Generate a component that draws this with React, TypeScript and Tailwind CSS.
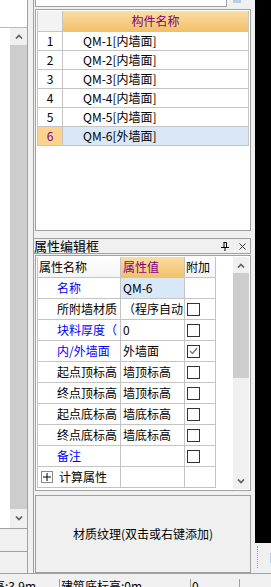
const names = ['QM-1[内墙面]', 'QM-2[内墙面]', 'QM-3[内墙面]', 'QM-4[内墙面]', 'QM-5[内墙面]', 'QM-6[外墙面]']

type Prop = { label: string; value?: string; blue?: boolean; check?: boolean | null; selected?: boolean }

const props: Prop[] = [
  { label: '名称', value: 'QM-6', blue: true, check: null, selected: true },
  { label: '所附墙材质', value: '（程序自动', check: false },
  { label: '块料厚度（', value: '0', blue: true, check: false },
  { label: '内/外墙面', value: '外墙面', blue: true, check: true },
  { label: '起点顶标高', value: '墙顶标高', check: false },
  { label: '终点顶标高', value: '墙顶标高', check: false },
  { label: '起点底标高', value: '墙底标高', check: false },
  { label: '终点底标高', value: '墙底标高', check: false },
  { label: '备注', blue: true, check: false },
]

function Chevron({ down }: { down?: boolean }) {
  return (
    <svg width="8" height="5" viewBox="0 0 8 5" className={down ? 'rotate-180' : ''}>
      <path d="M1 4.5 L4 1.5 L7 4.5" fill="none" stroke="#606060" strokeWidth="1.7" />
    </svg>
  )
}

function Check({ on }: { on: boolean }) {
  return (
    <div className="w-[13px] h-[13px] border border-[#333333] bg-white flex items-center justify-center">
      {on && (
        <svg width="9" height="8" viewBox="0 0 9 8">
          <path d="M1 4 L3.5 6.5 L8 1" fill="none" stroke="#777777" strokeWidth="1.3" />
        </svg>
      )}
    </div>
  )
}

export default function App() {
  return (
    <div className="w-[271px] h-[587px] overflow-hidden bg-[#f0f0f0] flex flex-col font-['Noto_Sans_CJK_SC',sans-serif] text-[12px] text-black">
      <div className="h-[573px] flex">
        {/* left tree column */}
        <div className="w-[28px] flex flex-col border-r border-[#a0a0a0]">
          <div className="h-[28px] bg-white border-b border-[#b8b8b8]" />
          <div className="flex-1 flex">
            <div className="w-[10px] bg-white" />
            <div className="w-[17px] flex flex-col">
              <div className="h-[17px] flex items-center justify-center"><Chevron /></div>
              <div className="flex-1 bg-[#cdcdcd]" />
              <div className="h-[19px] flex items-center justify-center"><Chevron down /></div>
            </div>
          </div>
          <div className="h-[23px] border-t border-[#a0a0a0]" />
          <div className="h-[22px] border-t border-[#a0a0a0]" />
        </div>
        <div className="w-[6px] border-r border-[#a0a0a0]" />

        {/* main panels */}
        <div className="w-[217px] pl-[1px] flex flex-col">
          <div className="h-[7px] flex">
            <div className="w-[192px] bg-white border-l border-r border-b border-[#a0a0a0]" />
            <div className="flex-1 pl-[5px]">
              <div className="w-[8px] h-[3px] bg-[#b7cde8] ml-[1px]" />
            </div>
          </div>

          <div className="mt-[2px] h-[222px] border border-[#a0a0a0] bg-white p-[1px]">
            <div className="border-l border-r border-[#c4c4c4]">
              <div className="flex h-[21px] border-b border-[#c4c4c4]">
                <div className="w-[25px] border-r border-[#c4c4c4] bg-[#f3f3f3]" />
                <div className="flex-1 flex items-center justify-center leading-[14px] text-[#800080] bg-gradient-to-b from-[#fbdda3] to-[#f2c168]">构件名称</div>
              </div>
              {names.map((n, i) => {
                const sel = i === names.length - 1
                return (
                  <div key={n} className="flex h-[19px] border-b border-[#c4c4c4]">
                    <div className={sel ? 'w-[25px] border-r border-[#c4c4c4] bg-[#fcd38d] text-[#800080] flex items-center justify-center leading-[14px]' : 'w-[25px] border-r border-[#c4c4c4] flex items-center justify-center leading-[14px]'}>{i + 1}</div>
                    <div className={sel ? 'flex-1 pl-[20px] flex items-center leading-[14px] bg-[#d9e8f6]' : 'flex-1 pl-[20px] flex items-center leading-[14px]'}>{n}</div>
                  </div>
                )
              })}
            </div>
          </div>

          <div className="mt-[7px] h-[16px] border-t border-b border-r border-[#a0a0a0] -ml-[1px] flex items-center leading-[14px] text-[13px]">
            <span className="flex-1">属性编辑框</span>
            <svg width="8" height="9" viewBox="0 0 8 9" className="mr-[10px]">
              <path d="M2.5 0.5 H5.5 V5 M3 0.5 V5 M0 5.5 H8 M4 6 V9" fill="none" stroke="#000" strokeWidth="1" />
            </svg>
            <svg width="7" height="7" viewBox="0 0 7 7" className="mr-[4px]">
              <path d="M0.5 0.5 L6.5 6.5 M6.5 0.5 L0.5 6.5" stroke="#333" strokeWidth="1" />
            </svg>
          </div>

          <div className="mt-[1px] h-[236px] border border-[#a0a0a0] bg-white p-[1px] flex">
            <div className="w-[179px] flex flex-col">
              <div className="flex h-[21px] border-b border-l border-[#c4c4c4]">
                <div className="w-[83px] border-r border-[#c4c4c4] pl-[1px] flex items-center leading-[14px] bg-gradient-to-b from-white to-[#f4f4f4]">属性名称</div>
                <div className="w-[64px] border-r border-[#c4c4c4] pl-[2px] flex items-center leading-[14px] text-[#800080] bg-gradient-to-b from-[#fbdda3] to-[#f2c168]">属性值</div>
                <div className="w-[31px] border-r border-[#c4c4c4] pl-[1px] flex items-center leading-[14px] bg-gradient-to-b from-white to-[#f4f4f4]">附加</div>
              </div>
              {props.map((p) => (
                <div key={p.label} className="flex h-[21px] border-b border-l border-[#c4c4c4]">
                  <div className={p.blue ? 'w-[83px] border-r border-[#c4c4c4] pl-[19px] flex items-center leading-[14px] text-[#0000ff] whitespace-nowrap overflow-hidden' : 'w-[83px] border-r border-[#c4c4c4] pl-[19px] flex items-center leading-[14px] whitespace-nowrap overflow-hidden'}>{p.label}</div>
                  <div className={p.selected ? 'w-[64px] border-r border-[#c4c4c4] pl-[2px] flex items-center leading-[14px] whitespace-nowrap overflow-hidden bg-[#d9e8f6]' : 'w-[64px] border-r border-[#c4c4c4] pl-[2px] flex items-center leading-[14px] whitespace-nowrap overflow-hidden'}>{p.value}</div>
                  <div className="w-[31px] border-r border-[#c4c4c4] pl-[2px] flex items-center">
                    {p.check !== null && p.check !== undefined && <Check on={p.check} />}
                  </div>
                </div>
              ))}
              <div className="flex h-[21px] border-b border-l border-[#c4c4c4]">
                <div className="w-[83px] border-r border-[#c4c4c4] pl-[3px] flex items-center leading-[14px] gap-[6px]">
                  <div className="w-[12px] h-[12px] border border-[#8a8a8a] flex items-center justify-center">
                    <svg width="8" height="8" viewBox="0 0 8 8">
                      <path d="M0 4 H8 M4 0 V8" stroke="#000" strokeWidth="1" />
                    </svg>
                  </div>
                  <span>计算属性</span>
                </div>
                <div className="w-[64px] border-r border-[#c4c4c4]" />
                <div className="w-[31px] border-r border-[#c4c4c4]" />
              </div>
            </div>
            <div className="flex-1" />
            <div className="w-[16px] flex flex-col">
              <div className="h-[16px] bg-[#f0f0f0] flex items-center justify-center"><Chevron /></div>
              <div className="h-[105px] bg-[#cdcdcd]" />
              <div className="flex-1 bg-[#f0f0f0]" />
              <div className="h-[16px] bg-[#f0f0f0] flex items-center justify-center"><Chevron down /></div>
            </div>
          </div>

          <div className="mt-[4px] h-[78px] border border-[#a0a0a0] flex items-center justify-center leading-[14px]">
            材质纹理(双击或右键添加)
          </div>
        </div>

        <div className="w-[4px]" />
        <div className="w-[16px] flex flex-col">
          <div className="h-[543px] bg-black" />
          <div className="flex-1 flex pt-[3px]">
            <div className="w-[2px] h-[22px] ml-[2px] border-l border-dotted border-[#9a9a9a]" />
            <div className="flex-1" />
            <div className="w-[1px] h-[10px] mt-[7px] bg-[#b7cde8]" />
          </div>
        </div>
      </div>

      <div className="h-[14px] border-t border-[#a0a0a0] flex leading-[14px] whitespace-nowrap overflow-hidden pt-[5px]">
        <div className="w-[60px] border-r border-[#a0a0a0] overflow-hidden">
          <span className="block -ml-[7px]">高:3.9m</span>
        </div>
        <div className="w-[131px] border-r border-[#a0a0a0] pl-[1px]">建筑底标高:0m</div>
        <div className="w-[49px] border-r border-[#a0a0a0] pl-[1px]">0</div>
        <div className="flex-1" />
      </div>
    </div>
  )
}
